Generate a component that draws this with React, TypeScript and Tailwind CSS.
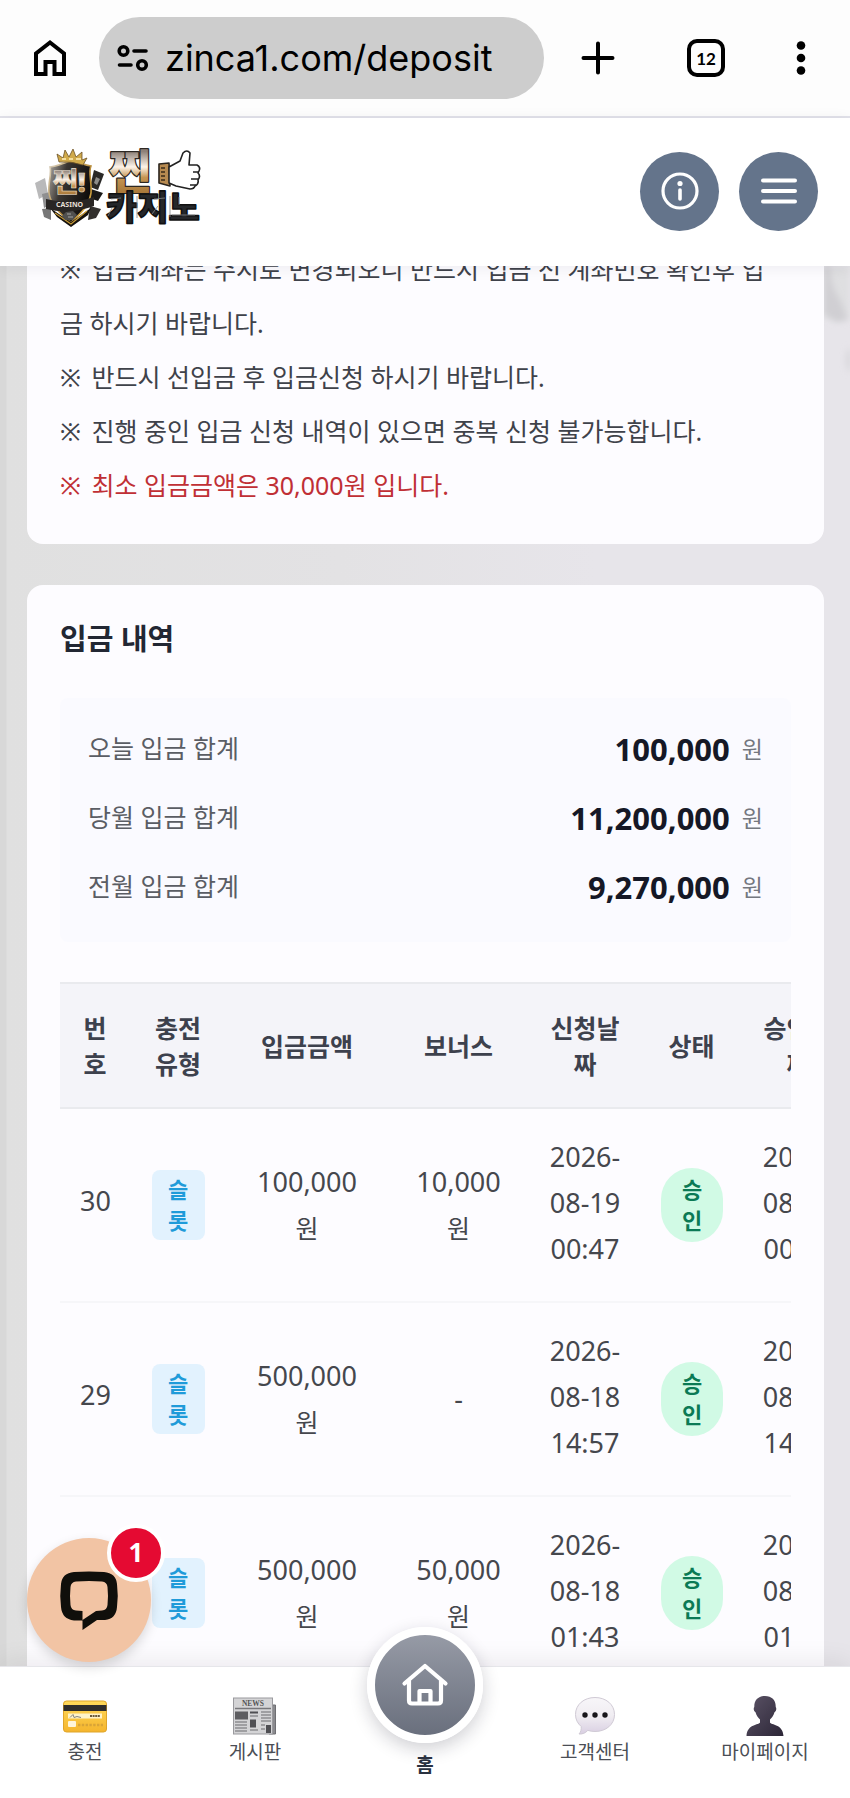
import React from "react";

type Deposit = {
  no: number;
  amount: string;
  bonus: string | null;
  date: string;
  time: string;
};

const notes = [
  "입금계좌는 수시로 변경되오니 반드시 입금 전 계좌번호 확인후 입금 하시기 바랍니다.",
  "반드시 선입금 후 입금신청 하시기 바랍니다.",
  "진행 중인 입금 신청 내역이 있으면 중복 신청 불가능합니다.",
];

const totals = [
  { label: "오늘 입금 합계", value: "100,000" },
  { label: "당월 입금 합계", value: "11,200,000" },
  { label: "전월 입금 합계", value: "9,270,000" },
];

const deposits: Deposit[] = [
  { no: 30, amount: "100,000", bonus: "10,000", date: "2026-08-19", time: "00:47" },
  { no: 29, amount: "500,000", bonus: null, date: "2026-08-18", time: "14:57" },
  { no: 28, amount: "500,000", bonus: "50,000", date: "2026-08-18", time: "01:43" },
];

const headings = ["번호", "충전유형", "입금금액", "보너스", "신청날짜", "상태", "승인날짜"];

function BrowserBar() {
  return (
    <div className="flex h-[118px] shrink-0 items-center border-b-2 border-[#e2e2ea] bg-[#fdfdfd] pr-11 pl-8 text-black">
      <button type="button" aria-label="홈페이지" className="flex w-[67px] shrink-0">
        <svg width="36" height="40" viewBox="0 0 36 40" fill="none" stroke="currentColor" strokeWidth="4">
          <path d="M4 36V15.500L18 4.500l14 11V36H22.500V24h-9v12z" />
        </svg>
      </button>
      <div className="flex h-[82px] min-w-0 flex-1 items-center gap-4 rounded-full bg-[#cdcdcd] pr-6 pl-[18px]">
        <svg className="shrink-0" width="32" height="28" viewBox="0 0 32 28" fill="none" stroke="currentColor" strokeWidth="3.600" strokeLinecap="round">
          <circle cx="6.500" cy="7" r="4.300" />
          <path d="M17 7H29M2.500 21H14" />
          <circle cx="25" cy="21" r="4.300" />
        </svg>
        <input
          aria-label="주소"
          readOnly
          value="zinca1.com/deposit"
          className="w-full min-w-0 bg-transparent font-['Inter',sans-serif] text-[36px] leading-[48px] outline-none"
        />
      </div>
      <div className="flex w-[262px] shrink-0 items-center justify-between pl-9">
        <button type="button" aria-label="새 탭">
          <svg width="36" height="36" viewBox="0 0 36 36" stroke="currentColor" strokeWidth="4" strokeLinecap="round">
            <path d="M18 3.500v29M3.500 18h29" />
          </svg>
        </button>
        <button
          type="button"
          aria-label="탭 12개"
          className="flex size-[38px] items-center justify-center rounded-[10px] border-4 border-black font-['Lato',sans-serif] text-[17px] leading-none font-bold"
        >
          12
        </button>
        <button type="button" aria-label="메뉴 더보기">
          <svg width="10" height="36" viewBox="0 0 10 36" fill="currentColor">
            <circle cx="5" cy="5.500" r="4.300" />
            <circle cx="5" cy="18" r="4.300" />
            <circle cx="5" cy="30.500" r="4.300" />
          </svg>
        </button>
      </div>
    </div>
  );
}

function Logo() {
  return (
    <svg width="168" height="84" viewBox="0 0 168 84" role="img" aria-label="찐 카지노">
      <defs>
        <linearGradient id="gold" x1="0" y1="0" x2="0" y2="1">
          <stop offset="0.200" stopColor="#8d8078" />
          <stop offset="0.450" stopColor="#fdf4ea" />
          <stop offset="0.620" stopColor="#c69552" />
          <stop offset="1" stopColor="#9a6a2e" />
        </linearGradient>
        <linearGradient id="shield" x1="0" y1="0" x2="1" y2="0.400">
          <stop offset="0" stopColor="#b5afa8" />
          <stop offset="0.400" stopColor="#3a3632" />
          <stop offset="1" stopColor="#0f0d0c" />
        </linearGradient>
        <linearGradient id="rim" x1="0" y1="0" x2="1" y2="1">
          <stop offset="0" stopColor="#d8d0c0" />
          <stop offset="0.600" stopColor="#b88a35" />
          <stop offset="1" stopColor="#e8b94b" />
        </linearGradient>
      </defs>
      <g>
        <path d="M1 35l10-5 3 16-9 5z" fill="#b9b9ba" />
        <path d="M8 46l8-2 2 12-8 4z" fill="#8f8f90" />
        <path d="M8 61l9-1v12l-7-3z" fill="#777" />
        <path d="M60 22l10 4-6 16-8-3z" fill="#2a2927" />
        <path d="M62 29l4 2-3 6-3-2z" fill="#8e8d8a" />
        <path d="M57 41l12 4-5 8-9-3z" fill="#191817" />
        <path d="M56 58l11 3-5 9-8 2z" fill="#32302d" />
        <path d="M38 12c7 3 13 5 19 6-3 6 1 16 0 27-2 14-11 20-20 30C26 65 17 58 15 45c-1-11 3-20 1-26 8-1 15-4 22-7z" fill="url(#shield)" stroke="url(#rim)" strokeWidth="1.600" />
        <path d="M16 60l21 14 20-14-3 7-17 12-14-10z" fill="#16120d" />
        <path d="M21 65l16 11 16-13" fill="none" stroke="#c79a36" strokeWidth="1.200" />
        <path d="M25 14l-2-8 6 4 2-8 4 7 4-8 3 8 6-5v8l5-2-4 7q-12-4-24-3z" fill="#d0aa4b" stroke="#6c5226" strokeWidth="0.800" />
        <path d="M28 11h4m3 0h4m3 0h5" stroke="#fff1bd" strokeWidth="1.600" />
        <text x="19" y="44" fontSize="27" fontWeight="900" fill="url(#gold)" stroke="#efe5d7" strokeWidth="0.600">
          찐!
        </text>
        <path d="M12 51q24 6 48-2v9q-24 9-48 3z" fill="#292624" />
        <text x="22" y="59" fontSize="7" fontWeight="700" fill="#e6dfd4">
          CASINO
        </text>
        <path d="M32 64l7-1 4 4-4 5-8 0-3-4z" fill="#50504f" />
        <path d="M33 66h4m-3 3h5" stroke="#a4a4a4" strokeWidth="1.200" />
      </g>
      <g strokeLinejoin="round">
        <text x="75" y="40" fontSize="46" fontWeight="900" fill="url(#gold)" stroke="#2c2722" strokeWidth="2.400" paintOrder="stroke">
          찐
        </text>
        <path d="M125 16l10-1 1 23-11-3z" fill="#b78a50" stroke="#2a241d" strokeWidth="1.600" />
        <path d="M127 20h4m-4 4h4m-4 4h4m-4 4h4" stroke="#3a2b19" strokeWidth="1.400" />
        <path
          d="M135 19l11-6 3-8q4-4 7 0l-1 12h8q4 2 2 6l-1 2q3 3 0 7 1 4-3 6-1 3-5 3l-14-3-7-3z"
          fill="#fff"
          stroke="#222"
          strokeWidth="1.600"
        />
        <path d="M159 24h6m-8 7h7m-8 6h6" stroke="#222" strokeWidth="1.400" />
        <text x="72" y="72" fontSize="34" fontWeight="900" fill="#25272a" stroke="#111" strokeWidth="1.600">
          카지노
        </text>
        <path d="M77 51l10-1m-9 10l-4 8m46-17l11-1m-7 8l-6 8m27-17v8m-7 10h23M103 48v22m33-22v21" stroke="#85888b" strokeWidth="0.800" fill="none" />
      </g>
    </svg>
  );
}

function SiteHeader() {
  return (
    <header className="relative z-10 flex h-[148px] shrink-0 items-center justify-between bg-white pr-8 pl-[34px] shadow-[0_2px_14px_rgba(15,15,40,0.07)]">
      <a href="#home" className="pb-1">
        <Logo />
      </a>
      <div className="flex gap-5 pb-0.5">
        <button type="button" aria-label="안내" className="flex size-[79px] items-center justify-center rounded-full bg-[#64748b] text-white">
          <svg width="40" height="40" viewBox="0 0 40 40" fill="none" stroke="currentColor" strokeWidth="3.200" strokeLinecap="round">
            <circle cx="20" cy="20" r="17" />
            <path d="M20 19v9" strokeWidth="3.600" />
            <circle cx="20" cy="12.500" r="2.600" fill="currentColor" stroke="none" />
          </svg>
        </button>
        <button type="button" aria-label="메뉴" className="flex size-[79px] items-center justify-center rounded-full bg-[#64748b] text-white">
          <svg width="38" height="30" viewBox="0 0 38 30" stroke="currentColor" strokeWidth="4" strokeLinecap="round">
            <path d="M3 4.500h32M3 15h32M3 25.500h32" />
          </svg>
        </button>
      </div>
    </header>
  );
}

function Note({ children }: { children: React.ReactNode }) {
  return (
    <p className="break-all">
      <span className="mr-1">※</span> {children}
    </p>
  );
}

function Totals() {
  return (
    <dl className="mt-10 flex flex-col gap-[23px] rounded-lg bg-[#fafaff] px-7 pt-7 pb-8">
      {totals.map((t) => (
        <div key={t.label} className="flex h-[46px] items-center justify-between">
          <dt className="text-[25px] text-[#5a5d64]">{t.label}</dt>
          <dd className="flex items-center gap-3">
            <span className="text-[31px] leading-[46px] font-bold text-[#151826]">{t.value}</span>
            <span className="text-[23px] text-[#74777f]">원</span>
          </dd>
        </div>
      ))}
    </dl>
  );
}

function DepositTable() {
  return (
    <div className="mt-10 overflow-x-auto [scrollbar-width:none]">
      <table className="w-[794px] table-fixed border-collapse text-center">
        <colgroup>
          <col className="w-[70px]" />
          <col className="w-24" />
          <col className="w-[162px]" />
          <col className="w-[141px]" />
          <col className="w-28" />
          <col className="w-[101px]" />
          <col className="w-28" />
        </colgroup>
        <thead>
          <tr className="h-[125px] border-y-2 border-[#e9eaee] bg-[#f4f4f9]">
            {headings.map((h) => (
              <th key={h} scope="col" className="px-5 text-[25px] leading-[36px] font-bold text-[#3d414d]">
                {h}
              </th>
            ))}
          </tr>
        </thead>
        <tbody>
          {deposits.map((d) => (
            <tr key={d.no} className="h-[194px] border-b-2 border-[#f6f6f9] text-[27px] leading-[46px] text-[#45474d]">
              <td className="px-5 pb-2">{d.no}</td>
              <td className="px-5">
                <span className="-mx-2 inline-block w-[53px] rounded-lg bg-[#e2f2fe] px-4 py-1 align-middle text-[22px] leading-[31px] font-bold text-[#1f9bd9]">
                  슬롯
                </span>
              </td>
              <td className="px-5">
                {d.amount}
                <br />
                <span className="text-[25px]">원</span>
              </td>
              <td className="px-5">
                {d.bonus ? (
                  <>
                    {d.bonus}
                    <br />
                    <span className="text-[25px]">원</span>
                  </>
                ) : (
                  "-"
                )}
              </td>
              <td className="px-5 pb-1">
                {d.date} {d.time}
              </td>
              <td className="px-5">
                <span className="inline-block w-[62px] rounded-full bg-[#d1fae5] px-5 py-1.5 align-middle text-[22px] leading-[31px] font-bold text-[#0b7a55]">
                  승인
                </span>
              </td>
              <td className="px-5 pb-1">
                {d.date} {d.time}
              </td>
            </tr>
          ))}
        </tbody>
      </table>
    </div>
  );
}

function CardIcon() {
  return (
    <svg width="44" height="40" viewBox="0 0 44 40" aria-hidden="true">
      <defs>
        <linearGradient id="cardFill" x1="0" y1="0" x2="0" y2="1">
          <stop offset="0" stopColor="#ffd95a" />
          <stop offset="1" stopColor="#f5b52d" />
        </linearGradient>
      </defs>
      <rect x="0.500" y="5" width="43" height="31" rx="3" fill="url(#cardFill)" stroke="#dfa52a" />
      <path d="M0.500 9h43v6h-43z" fill="#2f2d2b" />
      <path d="M5 17.500h34v5H5z" fill="#fff3c9" />
      <path d="M7 21.500l3-3 1 3 3-1 4 1" fill="none" stroke="#777" strokeWidth="0.900" />
      <path d="M27 20h10" stroke="#6a5a3a" strokeWidth="2.200" strokeDasharray="2 0.600" />
      <rect x="5" y="25" width="8" height="6" rx="1" fill="#fff5da" />
      <path d="M15 29h25" stroke="#d9a437" strokeWidth="2.400" strokeDasharray="2.400 1.400" />
    </svg>
  );
}

function NewsIcon() {
  return (
    <svg width="44" height="40" viewBox="0 0 44 40" aria-hidden="true">
      <path d="M38 9h4.500v29H36z" fill="#8b8b8f" stroke="#6f6f73" />
      <rect x="0.500" y="2" width="39" height="36" fill="#d4d4d6" stroke="#9a9a9e" />
      <text x="20" y="10" textAnchor="middle" fontSize="7.500" fontWeight="700" fill="#555" className="font-['Liberation_Serif',serif]">
        NEWS
      </text>
      <path d="M2 12.500h36" stroke="#77777b" strokeWidth="1.400" />
      <path d="M2 15.500h13v8H2z" fill="#5d5d61" />
      <path d="M17 15.500h8v2h-8zM17 23.500h6v8h-6zM33 29h5v8h-5z" fill="#4f4f53" />
      <path d="M2 26h12M2 29h12M2 32h12M2 35h12M17 20h8M17 34h8M28 16h10M28 19h10M28 22h10M28 25h10M28 29h4M28 33h4" stroke="#8d8d91" strokeWidth="1.300" />
    </svg>
  );
}

function BubbleIcon() {
  return (
    <svg width="44" height="40" viewBox="0 0 44 40" aria-hidden="true">
      <defs>
        <linearGradient id="bubbleFill" x1="0" y1="0" x2="0" y2="1">
          <stop offset="0" stopColor="#f8f6f9" />
          <stop offset="0.500" stopColor="#f0edf2" />
          <stop offset="1" stopColor="#d9cfe2" />
        </linearGradient>
      </defs>
      <path
        d="M22 1.500c11 0 19.500 7 19.500 17S33 35.500 22 35.500c-2.600 0-5-.4-7.200-1.100C12.500 37 9.500 38.300 6 38c1.800-2 2.500-4.500 2.200-7.500C4.600 27.500 2.500 23.300 2.500 18.500c0-10 8.500-17 19.500-17z"
        fill="url(#bubbleFill)"
        stroke="#d0cad5"
      />
      <circle cx="12" cy="19" r="2.700" fill="#17151a" />
      <circle cx="22" cy="19" r="2.700" fill="#17151a" />
      <circle cx="32" cy="19" r="2.700" fill="#17151a" />
    </svg>
  );
}

function PersonIcon() {
  return (
    <svg width="44" height="40" viewBox="0 0 44 40" aria-hidden="true">
      <defs>
        <linearGradient id="personFill" x1="0" y1="0" x2="1" y2="1">
          <stop offset="0" stopColor="#5b5366" />
          <stop offset="1" stopColor="#2c2637" />
        </linearGradient>
      </defs>
      <path
        d="M22 0c7 0 11 4.500 10.700 11 1 1 .8 4-1.200 5.200C30.500 20 28.500 22 27 23.500v3c1 2.500 13 1.500 13.500 13.500h-37C4 28 16 29 17 26.500v-3c-1.500-1.500-3.500-3.500-4.500-7.300-2-1.200-2.200-4.200-1.200-5.200C11 4.500 15 0 22 0z"
        fill="url(#personFill)"
      />
    </svg>
  );
}

function NavItem({ label, href, icon }: { label: string; href: string; icon: React.ReactNode }) {
  return (
    <a href={href} className="flex flex-col items-center gap-0.5 pt-[29px] text-[19px] leading-[28px] text-[#4b4e55]">
      {icon}
      {label}
    </a>
  );
}

function BottomNav() {
  return (
    <nav className="relative z-10 grid h-[132px] shrink-0 grid-cols-5 border-t border-[#e6e6ea] bg-white shadow-[0_-4px_24px_rgba(20,10,20,0.08)]">
      <NavItem label="충전" href="#charge" icon={<CardIcon />} />
      <NavItem label="게시판" href="#board" icon={<NewsIcon />} />
      <a href="#home" className="flex flex-col items-center gap-2 text-[19px] leading-[28px] font-bold text-[#2a3140]">
        <span className="-mt-10 flex size-[116px] shrink-0 items-center justify-center rounded-full border-8 border-white bg-linear-to-b from-[#9a9ea9] to-[#666c7a] bg-origin-border text-white shadow-[0_6px_18px_rgba(20,20,40,0.2)]">
          <svg width="48" height="44" viewBox="0 0 48 44" fill="none" stroke="currentColor" strokeWidth="4.200" strokeLinecap="round" strokeLinejoin="round">
            <path d="M3.500 20.500L24 3l20.500 17.500" />
            <path d="M8 18v19.500q0 3 3 3h26q3 0 3-3V18" />
            <path d="M18.500 40V28h11v12" />
          </svg>
        </span>
        홈
      </a>
      <NavItem label="고객센터" href="#support" icon={<BubbleIcon />} />
      <NavItem label="마이페이지" href="#mypage" icon={<PersonIcon />} />
    </nav>
  );
}

function ChatButton() {
  return (
    <button
      type="button"
      aria-label="채팅, 새 메시지 1개"
      className="absolute bottom-[136px] left-[27px] z-20 flex size-[124px] items-center justify-center rounded-full bg-[#f2c4a4] shadow-[0_5px_12px_rgba(0,0,0,0.15)]"
    >
      <svg width="60" height="60" viewBox="0 0 60 60" aria-hidden="true">
        <path
          fillRule="evenodd"
          d="M15 2Q30 1 45 2 57 3 58 14 59.500 26 58 37 57 49 46 50H38L23.500 60V50.500H15Q3 49 2 37 0.500 26 2 14 3 3 15 2zM17 11.500Q12 12 11.500 17 10.500 26 11.500 35 12 40 17 40.500L23.500 41V50L37 41 43 40.500Q48 40 48.500 35 49.500 26 48.500 17 48 12 43 11.500 30 10.500 17 11.500z"
          fill="#100f0b"
        />
      </svg>
      <span className="absolute -top-[14px] -right-[14px] flex size-[58px] items-center justify-center rounded-full border-4 border-white bg-[#e50a32] pb-0.5 font-['Noto_Sans',sans-serif] text-[26px] leading-none font-bold text-white">
        1
      </span>
    </button>
  );
}

export default function App() {
  return (
    <div className="relative flex h-screen flex-col overflow-hidden bg-white font-['Noto_Sans','Noto_Sans_CJK_KR',sans-serif]">
      <BrowserBar />
      <SiteHeader />
      <main className="relative min-h-0 flex-1 overflow-y-auto bg-[linear-gradient(90deg,#d8d8d8_0,#d8d8d8_6px,#e0e0e0_7px,#e3e2e4_40%,#e7e5ea_70%)] pr-[26px] pl-[27px] [scrollbar-width:none]">
        <svg className="absolute top-0 right-0" width="26" height="120" viewBox="0 0 26 120" aria-hidden="true">
          <defs>
            <filter id="soft" x="-50%" y="-50%" width="200%" height="200%">
              <feGaussianBlur stdDeviation="3" />
            </filter>
          </defs>
          <path d="M0 0h26v52H0z" fill="#dfdfe1" filter="url(#soft)" />
          <path d="M0 0h6q0 20 10 34l8 20-12 2-12-8zM26 80q-7 14 0 28z" fill="#d0cfd3" filter="url(#soft)" />
        </svg>
        <section className="relative -mt-6 rounded-2xl bg-[#fdfcff] pr-[38px] pb-8 pl-[33px] text-[25px] leading-[54px] text-[#3f424a]">
          {notes.map((n) => (
            <Note key={n}>{n}</Note>
          ))}
          <div className="text-[#c02f35]">
            <Note>최소 입금금액은 30,000원 입니다.</Note>
          </div>
        </section>
        <section className="relative mt-[41px] rounded-2xl bg-[#fdfcff] px-[33px] pt-[35px] pb-10">
          <h2 className="text-[29px] leading-[38px] font-bold text-[#222733]">입금 내역</h2>
          <Totals />
          <DepositTable />
        </section>
      </main>
      <BottomNav />
      <ChatButton />
    </div>
  );
}
